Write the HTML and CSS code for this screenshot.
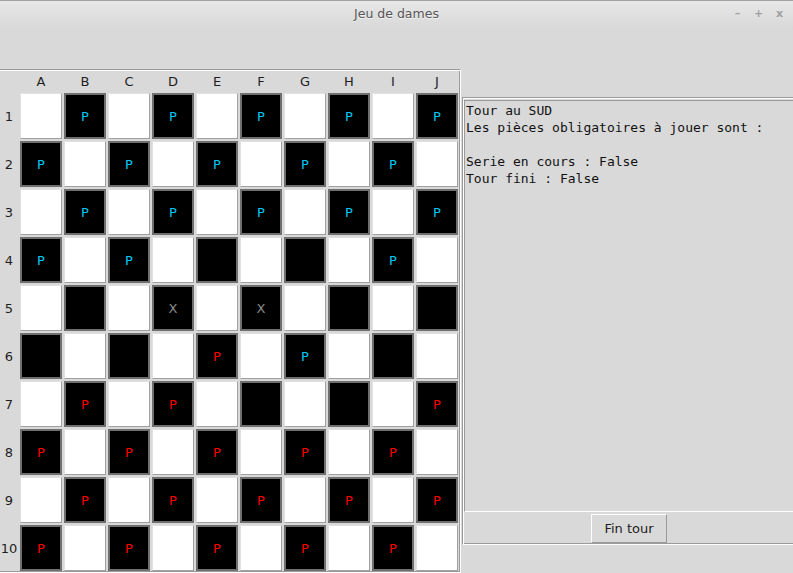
FILE: index.html
```html
<!DOCTYPE html>
<html lang="fr">
<head>
<meta charset="utf-8">
<title>Jeu de dames</title>
<link rel="stylesheet" href="styles.css">
</head>
<body>
<div class="window">
  <header class="titlebar">
    <span></span>
    <span class="title">Jeu de dames</span>
    <span class="controls"><span class="ctl">–</span><span class="ctl">+</span><span class="ctl">x</span></span>
  </header>
  <main class="main">
    <section class="board-frame">
      <div class="board">
        <div class="lbl"></div>
        <div class="lbl">A</div><div class="lbl">B</div><div class="lbl">C</div><div class="lbl">D</div><div class="lbl">E</div><div class="lbl">F</div><div class="lbl">G</div><div class="lbl">H</div><div class="lbl">I</div><div class="lbl">J</div>

        <div class="lbl">1</div>
        <div class="cell w"></div><div class="cell b"><span class="n">P</span></div><div class="cell w"></div><div class="cell b"><span class="n">P</span></div><div class="cell w"></div><div class="cell b"><span class="n">P</span></div><div class="cell w"></div><div class="cell b"><span class="n">P</span></div><div class="cell w"></div><div class="cell b"><span class="n">P</span></div>

        <div class="lbl">2</div>
        <div class="cell b"><span class="n">P</span></div><div class="cell w"></div><div class="cell b"><span class="n">P</span></div><div class="cell w"></div><div class="cell b"><span class="n">P</span></div><div class="cell w"></div><div class="cell b"><span class="n">P</span></div><div class="cell w"></div><div class="cell b"><span class="n">P</span></div><div class="cell w"></div>

        <div class="lbl">3</div>
        <div class="cell w"></div><div class="cell b"><span class="n">P</span></div><div class="cell w"></div><div class="cell b"><span class="n">P</span></div><div class="cell w"></div><div class="cell b"><span class="n">P</span></div><div class="cell w"></div><div class="cell b"><span class="n">P</span></div><div class="cell w"></div><div class="cell b"><span class="n">P</span></div>

        <div class="lbl">4</div>
        <div class="cell b"><span class="n">P</span></div><div class="cell w"></div><div class="cell b"><span class="n">P</span></div><div class="cell w"></div><div class="cell b"></div><div class="cell w"></div><div class="cell b"></div><div class="cell w"></div><div class="cell b"><span class="n">P</span></div><div class="cell w"></div>

        <div class="lbl">5</div>
        <div class="cell w"></div><div class="cell b"></div><div class="cell w"></div><div class="cell b"><span class="x">X</span></div><div class="cell w"></div><div class="cell b"><span class="x">X</span></div><div class="cell w"></div><div class="cell b"></div><div class="cell w"></div><div class="cell b"></div>

        <div class="lbl">6</div>
        <div class="cell b"></div><div class="cell w"></div><div class="cell b"></div><div class="cell w"></div><div class="cell b"><span class="s">P</span></div><div class="cell w"></div><div class="cell b"><span class="n">P</span></div><div class="cell w"></div><div class="cell b"></div><div class="cell w"></div>

        <div class="lbl">7</div>
        <div class="cell w"></div><div class="cell b"><span class="s">P</span></div><div class="cell w"></div><div class="cell b"><span class="s">P</span></div><div class="cell w"></div><div class="cell b"></div><div class="cell w"></div><div class="cell b"></div><div class="cell w"></div><div class="cell b"><span class="s">P</span></div>

        <div class="lbl">8</div>
        <div class="cell b"><span class="s">P</span></div><div class="cell w"></div><div class="cell b"><span class="s">P</span></div><div class="cell w"></div><div class="cell b"><span class="s">P</span></div><div class="cell w"></div><div class="cell b"><span class="s">P</span></div><div class="cell w"></div><div class="cell b"><span class="s">P</span></div><div class="cell w"></div>

        <div class="lbl">9</div>
        <div class="cell w"></div><div class="cell b"><span class="s">P</span></div><div class="cell w"></div><div class="cell b"><span class="s">P</span></div><div class="cell w"></div><div class="cell b"><span class="s">P</span></div><div class="cell w"></div><div class="cell b"><span class="s">P</span></div><div class="cell w"></div><div class="cell b"><span class="s">P</span></div>

        <div class="lbl">10</div>
        <div class="cell b"><span class="s">P</span></div><div class="cell w"></div><div class="cell b"><span class="s">P</span></div><div class="cell w"></div><div class="cell b"><span class="s">P</span></div><div class="cell w"></div><div class="cell b"><span class="s">P</span></div><div class="cell w"></div><div class="cell b"><span class="s">P</span></div><div class="cell w"></div>
      </div>
    </section>
    <section class="panel">
      <div class="textbox">Tour au SUD
Les pièces obligatoires à jouer sont :

Serie en cours : False
Tour fini : False</div>
      <div class="button-row"><button class="btn" type="button">Fin tour</button></div>
    </section>
  </main>
</div>
</body>
</html>
```

FILE: styles.css
```css
html, body {
  margin: 0;
  padding: 0;
  background: #d9d9d9;
}

.window {
  width: 793px;
  height: 573px;
  overflow: hidden;
  background: #d9d9d9;
  font-family: "DejaVu Sans", sans-serif;
}

.titlebar {
  box-sizing: border-box;
  height: 28px;
  border-top: 1px solid #a2a2a2;
  background: linear-gradient(#e7e7e7, #d9d9d9);
  display: grid;
  grid-template-columns: 1fr auto 1fr;
  align-items: center;
}

.title {
  font-family: "DejaVu Sans", sans-serif;
  font-size: 12.5px;
  color: #555555;
  text-shadow: 0 1px 0 #f4f4f4;
  margin-top: -2px;
}

.controls {
  justify-self: end;
  display: flex;
  padding-right: 3px;
  margin-top: -2px;
}

.ctl {
  width: 21px;
  text-align: center;
  font-family: "DejaVu Sans", sans-serif;
  font-weight: bold;
  font-size: 11px;
  color: #a0a0a0;
}

.main {
  display: flex;
  align-items: flex-start;
  padding-top: 41px;
}

.board-frame {
  flex: none;
  margin-left: -2px;
  padding: 1px 2px 1px 1px;
  border: 1px solid;
  border-color: #9a9a9a #ffffff #ffffff #9a9a9a;
  box-shadow: inset 1px 1px 0 #ffffff, inset -1px -1px 0 #9a9a9a;
}

.board {
  display: grid;
  grid-template-columns: 18px repeat(10, 42px);
  grid-template-rows: 20px repeat(10, 46px);
  gap: 2px;
}

.lbl {
  display: flex;
  align-items: center;
  justify-content: center;
  font-size: 13px;
  color: #1e1e1e;
}

.cell {
  box-sizing: border-box;
  display: flex;
  align-items: center;
  justify-content: center;
  font-size: 13px;
}

.cell.w {
  background: #ffffff;
  border: 1px solid;
  border-color: #e2e2e2 #a0a0a0 #a0a0a0 #e2e2e2;
}

.cell.b {
  background: #000000;
  border: 2px solid #6f6f6f;
}

.n { color: #00c8f8; }
.s { color: #ff0000; }
.x { color: #8a8a8a; }

.panel {
  flex: none;
  box-sizing: border-box;
  width: 334px;
  margin-left: 1px;
  margin-top: 28px;
  padding: 1px;
  border: 1px solid;
  border-color: #9a9a9a #ffffff #ffffff #9a9a9a;
  box-shadow: inset 1px 1px 0 #ffffff, inset -1px -1px 0 #9a9a9a;
}

.textbox {
  box-sizing: border-box;
  height: 412px;
  margin-top: 1px;
  padding: 1px 1px;
  border: 1px solid;
  border-color: #9a9a9a #ffffff #ffffff #9a9a9a;
  font-family: "DejaVu Sans Mono", monospace;
  font-size: 13px;
  line-height: 17px;
  color: #111111;
  white-space: pre;
}

.button-row {
  box-sizing: border-box;
  height: 31px;
  padding-top: 2px;
  display: flex;
  justify-content: center;
}

.btn {
  box-sizing: border-box;
  width: 76px;
  height: 29px;
  margin: 0;
  padding: 0;
  background: #d9d9d9;
  border: 1px solid;
  border-color: #ffffff #9a9a9a #9a9a9a #ffffff;
  font-family: "DejaVu Sans", sans-serif;
  font-size: 13px;
  color: #222222;
}
```
